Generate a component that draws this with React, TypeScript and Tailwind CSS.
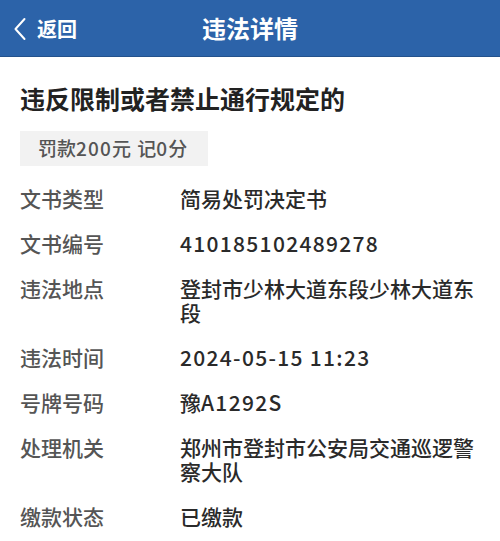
import React from "react";

const rows: { label: string; value: string }[] = [
  { label: "文书类型", value: "简易处罚决定书" },
  { label: "文书编号", value: "410185102489278" },
  { label: "违法地点", value: "登封市少林大道东段少林大道东段" },
  { label: "违法时间", value: "2024-05-15 11:23" },
  { label: "号牌号码", value: "豫A1292S" },
  { label: "处理机关", value: "郑州市登封市公安局交通巡逻警察大队" },
  { label: "缴款状态", value: "已缴款" },
];

function Runs({ text }: { text: string }) {
  const parts = text.match(/[\x20-\x7e]+|[^\x20-\x7e]+/g) || [];
  return (
    <>
      {parts.map((p, i) =>
        /^[\x20-\x7e]+$/.test(p) ? (
          <span key={i} className="tracking-[1.3px]">
            {p}
          </span>
        ) : (
          <span key={i}>{p}</span>
        )
      )}
    </>
  );
}

export default function App() {
  return (
    <div
      className="w-[500px] h-[541px] bg-white overflow-hidden"
      style={{ fontFamily: '"Noto Sans CJK SC", "Noto Sans", sans-serif' }}
    >
      <div className="relative h-[57px] bg-[#2c63a9] flex items-center justify-center border-b border-[#24528c]">
        <div className="absolute left-[14px] top-0 h-[57px] flex items-center gap-[11px] text-white">
          <svg width="12" height="24" viewBox="0 0 12 24" fill="none">
            <path d="M10.5 2 L1.5 12 L10.5 22" stroke="white" strokeWidth="2" strokeLinecap="round" strokeLinejoin="round" />
          </svg>
          <span className="text-[20px] font-bold leading-none">返回</span>
        </div>
        <span className="text-white text-[24px] font-bold leading-none">违法详情</span>
      </div>
      <div className="px-[20px]">
        <div className="mt-[25px] text-[25px] font-bold leading-[32px] text-[#222]">
          违反限制或者禁止通行规定的
        </div>
        <div className="mt-[17px] inline-flex items-center h-[35px] pl-[18px] pr-[21px] bg-[#f2f2f2] text-[19px] font-medium text-[#555]">
          <span>罚款</span>
          <span className="tracking-[1.2px]">200</span>
          <span>元</span>
          <span className="w-[6px]" />
          <span>记</span>
          <span className="tracking-[1.2px]">0</span>
          <span>分</span>
        </div>
        <div className="mt-[20px] flex flex-col gap-[21px]">
          {rows.map((r) => (
            <div key={r.label} className="flex text-[21px] leading-[24px]">
              <div className="w-[160px] shrink-0 text-[#555] font-medium">{r.label}</div>
              <div className="flex-1 text-[#2a2a2a] font-medium break-all">
                <Runs text={r.value} />
              </div>
            </div>
          ))}
        </div>
      </div>
    </div>
  );
}
